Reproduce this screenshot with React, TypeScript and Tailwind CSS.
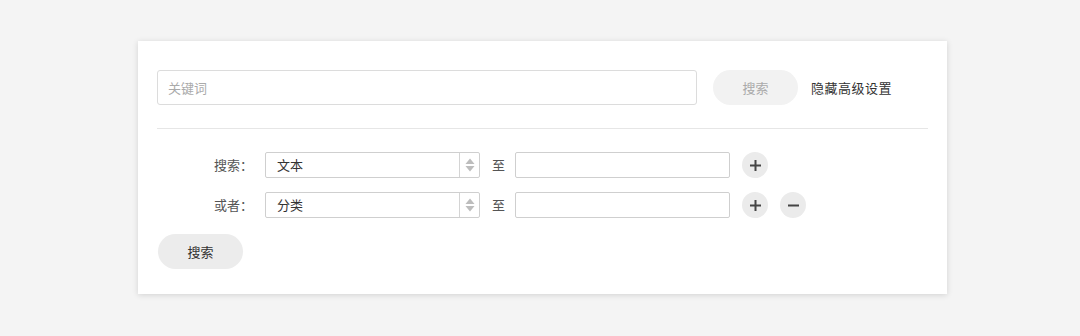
import React from "react";

const font = { fontFamily: '"Noto Sans CJK SC", "Noto Sans", sans-serif' };

function Arrows() {
  return (
    <div className="flex h-full w-[20px] flex-col items-center justify-center gap-[2px] border-l border-[#d4d4d4]">
      <svg width="10" height="6" viewBox="0 0 10 6">
        <path d="M0.5 6 L5 0.5 L9.5 6 Z" fill="#bdbdbd" />
      </svg>
      <svg width="10" height="6" viewBox="0 0 10 6">
        <path d="M0.5 0 L5 5.5 L9.5 0 Z" fill="#bdbdbd" />
      </svg>
    </div>
  );
}

function RoundBtn({ minus }: { minus?: boolean }) {
  return (
    <button className="flex h-[26px] w-[26px] items-center justify-center rounded-full bg-[#ebebeb]">
      <svg width="11" height="11" viewBox="0 0 11 11">
        <rect x="0" y="4.5" width="11" height="2" fill="#444" />
        {!minus && <rect x="4.5" y="0" width="2" height="11" fill="#444" />}
      </svg>
    </button>
  );
}

function Row({ label, value, minus }: { label: string; value: string; minus?: boolean }) {
  return (
    <div className="flex h-[26px] items-center">
      <div className="w-[96px] text-right text-[13px] text-[#555]">{label}</div>
      <div className="ml-[12px] flex h-[26px] w-[215px] items-center rounded-[2px] border border-[#cfcfcf] bg-white">
        <div className="flex-1 pl-[11px] text-[13px] text-[#333]">{value}</div>
        <Arrows />
      </div>
      <div className="ml-[12px] text-[13px] text-[#555]">至</div>
      <div className="ml-[10px] h-[26px] w-[215px] rounded-[2px] border border-[#cfcfcf] bg-white" />
      <div className="ml-[12px] flex gap-[12px]">
        <RoundBtn />
        {minus && <RoundBtn minus />}
      </div>
    </div>
  );
}

export default function App() {
  return (
    <div className="h-[336px] w-[1080px] bg-[#f4f4f4] pl-[138px] pt-[41px]" style={font}>
      <div className="w-[809px] bg-white px-[19px] pb-[25px] pt-[29px] shadow-[0_1px_6px_rgba(0,0,0,0.14)]">
        <div className="flex items-center">
          <div className="flex h-[35px] w-[540px] items-center rounded-[3px] border border-[#dcdcdc] pl-[10px] text-[13px] text-[#aaa]">
            关键词
          </div>
          <button className="ml-[16px] h-[35px] w-[85px] rounded-full bg-[#f2f2f2] text-[13px] text-[#aaa]">
            搜索
          </button>
          <div className="ml-[13px] text-[13px] tracking-[0.5px] text-[#333]">隐藏高级设置</div>
        </div>
        <div className="mt-[23px] h-px bg-[#e6e6e6]" />
        <div className="mt-[23px] flex flex-col gap-[14px]">
          <Row label="搜索：" value="文本" />
          <Row label="或者：" value="分类" minus />
        </div>
        <button className="ml-[1px] mt-[16px] h-[35px] w-[85px] rounded-full bg-[#ececec] text-[13px] text-[#333]">
          搜索
        </button>
      </div>
    </div>
  );
}
